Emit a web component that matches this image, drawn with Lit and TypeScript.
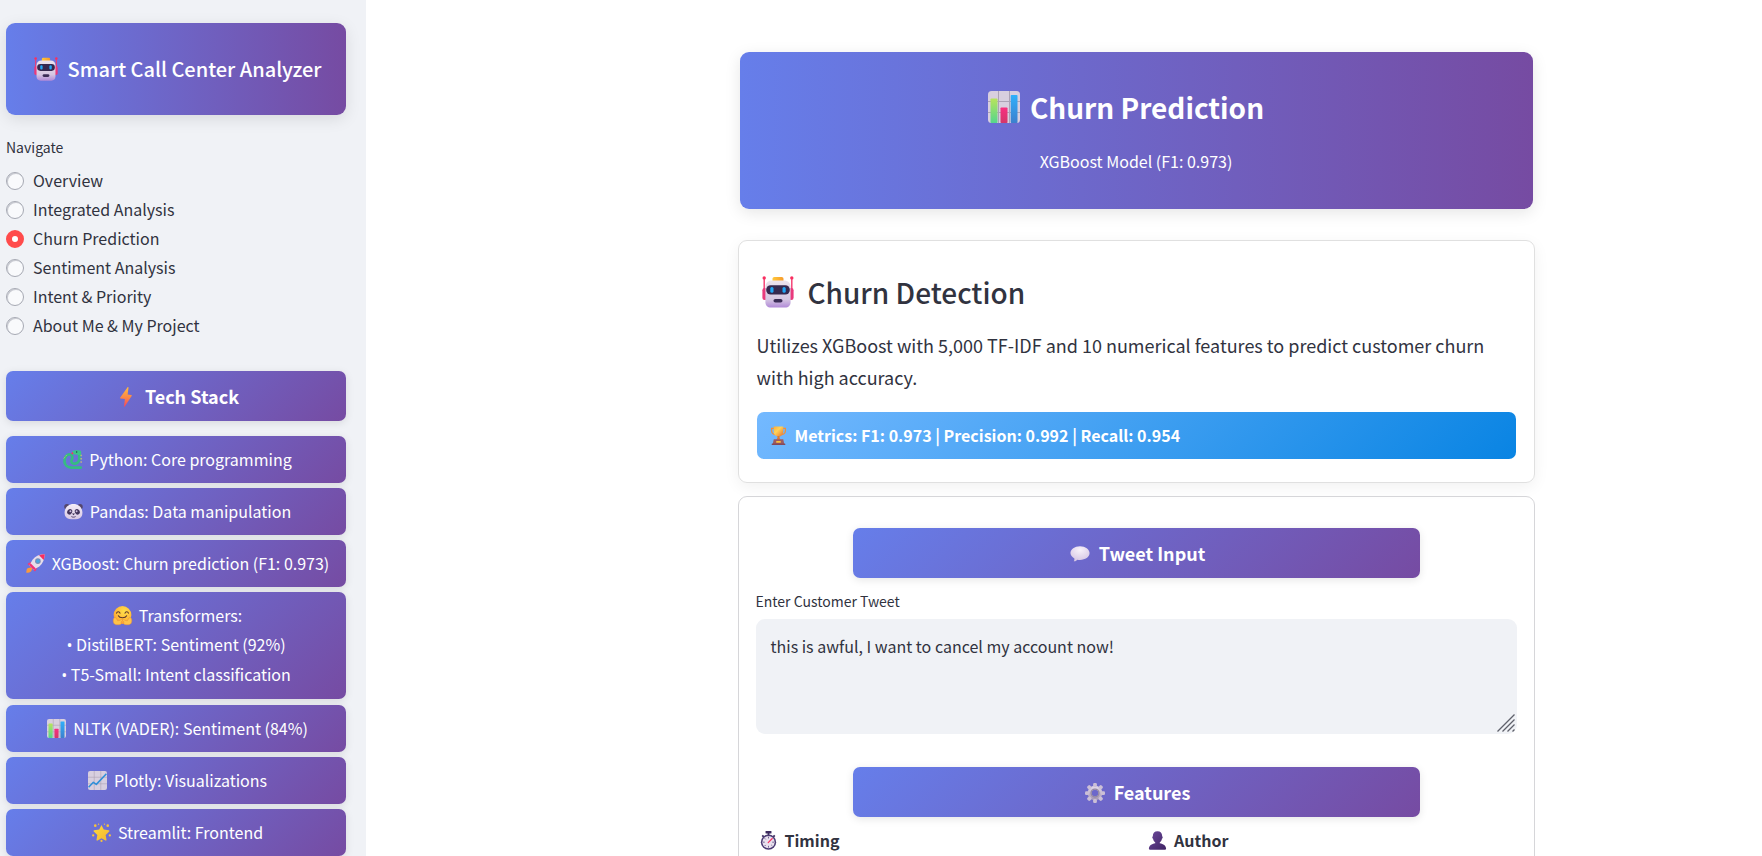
import { LitElement, html, css, svg, type TemplateResult } from "lit";
import { customElement, property, state } from "lit/decorators.js";

/* Artwork for every emoji, drawn on a 32 x 32 grid. */
const art: Record<string, TemplateResult> = {
  robot: svg`
    <defs>
      <linearGradient id="face" x1="0" y1="0" x2="0" y2="1"><stop offset="0" stop-color="#ece4ee"/><stop offset=".7" stop-color="#d5c6e2"/><stop offset="1" stop-color="#b18ad8"/></linearGradient>
      <linearGradient id="hat" x1="0" y1="0" x2="1" y2="0"><stop offset="0" stop-color="#ffc83a"/><stop offset="1" stop-color="#f79b2c"/></linearGradient>
    </defs>
    <path d="M2.2 2v14M29.8 2v14" stroke="#f4386e" stroke-width="1.4"/>
    <circle cx="2.2" cy="1.9" r="1.7" fill="#f92f60"/><circle cx="29.8" cy="1.9" r="1.7" fill="#f92f60"/>
    <rect x=".4" y="12" width="5" height="12" rx="2.2" fill="#e93a7c"/><rect x="26.6" y="12" width="5" height="12" rx="2.2" fill="#e93a7c"/>
    <rect x="10.5" y="1" width="11" height="6" rx="1.8" fill="url(#hat)"/>
    <path d="M10 4.5h12c4 0 6.600 2.500 6.600 6.500v15c0 3.500-2 5.500-5.500 5.500H8.900c-3.500 0-5.500-2-5.500-5.500V11c0-4 2.600-6.500 6.600-6.500z" fill="url(#face)"/>
    <rect x="4.200" y="9.200" width="23.600" height="9.300" rx="4.400" fill="#35284f"/>
    <rect x="8.300" y="11" width="3.200" height="5.800" rx="1.500" fill="#21a6f5"/><rect x="20.500" y="11" width="3.200" height="5.800" rx="1.500" fill="#21a6f5"/>
    <rect x="11.500" y="23" width="9" height="3.600" rx="1.800" fill="#3b2d57"/>`,
  chart: svg`
    <defs>
      <linearGradient id="cg" x1="0" y1="0" x2="0" y2="1"><stop offset="0" stop-color="#b8e45c"/><stop offset="1" stop-color="#54d68c"/></linearGradient>
      <linearGradient id="cb" x1="0" y1="0" x2="0" y2="1"><stop offset="0" stop-color="#2fb0fb"/><stop offset="1" stop-color="#3d7fcd"/></linearGradient>
      <linearGradient id="cr" x1="0" y1="0" x2="0" y2="1"><stop offset="0" stop-color="#f92f80"/><stop offset="1" stop-color="#d2376a"/></linearGradient>
    </defs>
    <rect width="32" height="32" rx="3.500" fill="#d8cfdf"/>
    <path d="M10.500 0v32M21.500 0v32M0 10.500h32M0 21.500h32" stroke="#aca2b5" stroke-width="1"/>
    <rect x="2.500" y="7.500" width="7" height="24.500" rx=".8" fill="url(#cg)"/>
    <rect x="12.500" y="16.500" width="7" height="15.500" rx=".8" fill="url(#cr)"/>
    <rect x="22.700" y="4" width="6.800" height="28" rx=".8" fill="url(#cb)"/>`,
  bolt: svg`
    <defs><linearGradient id="bl" x1="0" y1="0" x2="0" y2="1"><stop offset="0" stop-color="#ffbd3e"/><stop offset=".5" stop-color="#fc8a45"/><stop offset="1" stop-color="#f4475f"/></linearGradient></defs>
    <path d="M18.500.5 6.800 16.600c-.5.8-.2 1.500.7 1.700l6.800 1-1.500 11.500c-.1 1 .6 1.100 1.200.3L25 14.500c.5-.8.2-1.500-.7-1.600l-5.700-.8L20 1.200c.1-1-.8-1.500-1.500-.7z" fill="url(#bl)"/>`,
  snake: svg`
    <path d="M30 29.500H14C7.500 29.500 2.500 25.500 2.500 19S6 7.500 10.500 7.500c5 0 6.500 4 4.300 8.500-2 4 .2 7 4.200 7 5 0 8.500-3.500 8.500-9V4" fill="none" stroke="#36bb83" stroke-width="4.600" stroke-linecap="round" stroke-linejoin="round"/>
    <path d="M16 2C19 .2 28 0 30.500 2v6c-3 1-6 .5-8-.5-3 .3-5.500-.2-6.800-1.500-1-1.500-.8-3 .3-4z" fill="#3ac48a"/>
    <path d="M30.500 8v14" stroke="#f7e04a" stroke-width="1.600" stroke-dasharray="2.500 3"/>
    <path d="M1.500 14l6-7" stroke="#f7d64a" stroke-width="1.500" stroke-dasharray="2 2.500"/>
    <path d="M17 4.500l-2.500 2" stroke="#f92f60" stroke-width="2.600"/><circle cx="23" cy="3.500" r="1.200" fill="#2b3a4d"/>`,
  panda: svg`
    <defs><linearGradient id="pd" x1="0" y1="0" x2="0" y2="1"><stop offset="0" stop-color="#f5eef7"/><stop offset="1" stop-color="#d8c8e4"/></linearGradient></defs>
    <circle cx="5" cy="8" r="4.600" fill="#54466c"/><circle cx="27" cy="8" r="4.600" fill="#54466c"/>
    <path d="M16 3.500c9 0 15 6.500 15 14.500 0 7.500-4 11-15 11S1 25.500 1 18C1 10 7 3.500 16 3.500z" fill="url(#pd)"/>
    <ellipse cx="9.600" cy="16.500" rx="4" ry="4.800" transform="rotate(30 9.600 16.500)" fill="#43345c"/><ellipse cx="22.400" cy="16.500" rx="4" ry="4.800" transform="rotate(-30 22.400 16.500)" fill="#43345c"/>
    <circle cx="10.800" cy="15.500" r="1.600" fill="#cdbcdc"/><circle cx="21.200" cy="15.500" r="1.600" fill="#cdbcdc"/>
    <path d="M13.500 19.500h5L16 22.500z" fill="#33264a"/><path d="M12.500 24.500c1.500 1.300 5.500 1.300 7 0" stroke="#43345c" stroke-width="1.500" fill="none"/>`,
  rocket: svg`
    <path d="M9 22.500 2.500 23.800C1 26 .3 29 .5 31.500c3 .2 6-.6 8-2.200L10.500 25z" fill="#fb9a3b"/>
    <path d="M11.500 12.500 4.500 15c-1.500 1-2 2.500-1 3.300L9 20.500zM19.500 20.500l-2.500 7c-1 1.500-2.500 2-3.300 1L11.500 23z" fill="#f0387b"/>
    <path d="M31.500.5C23 .5 16 3.500 11 9.500L6.300 18c-.5 1-.3 2 .5 2.800l4.400 4.400c.8.800 1.800 1 2.800.5l8.500-4.700C28.500 16 31.500 9 31.500.5z" fill="#e6ddea"/>
    <path d="M6.300 18c-.5 1-.3 2 .5 2.800l4.400 4.400c.8.800 1.800 1 2.800.5l2.600-1.400-8.900-8.900z" fill="#ee3478"/>
    <path d="M31.500.5c-3.500 0-6.800.6-9.500 1.700l7.800 7.800c1.100-2.700 1.700-6 1.700-9.500z" fill="#f92f60"/>
    <circle cx="20" cy="12" r="4.700" fill="#7d8bb4"/><circle cx="20" cy="12" r="3" fill="#4ba5e0"/>`,
  hug: svg`
    <defs><radialGradient id="hg" cx=".6" cy=".3" r=".8"><stop offset="0" stop-color="#ffe04a"/><stop offset=".65" stop-color="#ffb637"/><stop offset="1" stop-color="#f28a35"/></radialGradient></defs>
    <circle cx="16" cy="15.200" r="15" fill="url(#hg)"/>
    <path d="M6 12c.8-3.200 5-3.200 5.800 0M20.200 12c.8-3.200 5-3.200 5.800 0" stroke="#5b352e" stroke-width="1.800" fill="none" stroke-linecap="round"/>
    <path d="M9 16.500c2 4.500 12 4.500 14 0" stroke="#5b352e" stroke-width="1.800" fill="none" stroke-linecap="round"/>
    <path d="M1 21c-1.500 4-.5 10.500 5 10.500h4c4 0 5-2.500 3.500-4.500l3-3.500c-1-2-3-1-4.500.5l-4 1-3-5c-1.500-1-3 0-4 1zM31 21c1.500 4 .5 10.500-5 10.500h-4c-4 0-5-2.500-3.500-4.500l-3-3.500c1-2 3-1 4.500.5l4 1 3-5c1.500-1 3 0 4 1z" fill="#ffc348" stroke="#e9923c" stroke-width=".9"/>`,
  trend: svg`
    <rect width="32" height="32" rx="3.500" fill="#d8cfdf"/>
    <path d="M10.500 0v32M21.500 0v32M0 10.500h32M0 21.500h32" stroke="#aca2b5" stroke-width="1"/>
    <path d="M1 27.500 9 19l5 3.500L31 4.500" fill="none" stroke="#2f8fd9" stroke-width="2.600" stroke-linejoin="round"/>`,
  star: svg`
    <defs><linearGradient id="st" x1="0" y1="0" x2="1" y2="1"><stop offset="0" stop-color="#ffd93b"/><stop offset="1" stop-color="#f3b52f"/></linearGradient></defs>
    <path d="M16 3.500l3.800 7.400 8.400 1.200c1.300.2 1.600 1.300.8 2.200l-6 5.900 1.400 8c.2 1.200-.8 1.900-1.800 1.300L16 25.800l-6.600 3.700c-1 .6-2-.1-1.800-1.300l1.400-8-6-5.900c-.8-.9-.5-2 .8-2.200l8.400-1.200z" fill="url(#st)"/>
    <g fill="#f8c33a"><circle cx="5.500" cy="4.500" r="2.200"/><circle cx="26.500" cy="4.500" r="2.200"/><circle cx="2" cy="21" r="1.900"/><circle cx="30" cy="21" r="1.900"/><circle cx="16" cy="30.200" r="1.800"/><circle cx="11" cy="2" r="1.100"/><circle cx="21" cy="2" r="1.100"/></g>`,
  trophy: svg`
    <defs><linearGradient id="tr" x1="0" y1="0" x2="1" y2="1"><stop offset="0" stop-color="#fdb03a"/><stop offset=".4" stop-color="#ffd257"/><stop offset="1" stop-color="#e8702f"/></linearGradient></defs>
    <path d="M8.500 4H4.300v4c0 3.500 2 5.500 5.500 6.500M23.500 4h4.200v4c0 3.500-2 5.500-5.500 6.500" fill="none" stroke="#f0913b" stroke-width="2"/>
    <path d="M8 1h16v8.500c0 4.500-3 8-8 8s-8-3.500-8-8z" fill="url(#tr)"/>
    <path d="M14.200 17h3.600v3l2 3h-7.600l2-3z" fill="#e0762f"/>
    <path d="M8 22.500h16l2 9.500H6z" fill="#9c5b62"/><rect x="4.500" y="29.500" width="23" height="2.500" rx="1" fill="#84495a"/><rect x="12" y="25.300" width="8" height="3" rx=".8" fill="#fbc13d"/>`,
  speech: svg`
    <defs><radialGradient id="sp" cx=".5" cy=".25" r=".8"><stop offset="0" stop-color="#f8f2fa"/><stop offset="1" stop-color="#d3c3e2"/></radialGradient></defs>
    <path d="M16 3.500c8.500 0 15.300 4.700 15.300 11s-6.800 11-15.300 11c-1.500 0-3-.2-4.200-.5C10.500 26.500 8.500 28 6 27.500c1-1.500 1.300-3 1-4.500C3.300 21 .7 18 .7 14.500.7 8.200 7.500 3.500 16 3.500z" fill="url(#sp)"/>`,
  gear: svg`
    <defs><linearGradient id="ge" x1="0" y1="0" x2="0" y2="1"><stop offset="0" stop-color="#ded4e6"/><stop offset="1" stop-color="#a99cb8"/></linearGradient></defs>
    <g fill="none" stroke="url(#ge)"><circle cx="16" cy="16" r="8.500" stroke-width="6.500"/></g>
    <g fill="#cbbfd6">${[0, 45, 90, 135, 180, 225, 270, 315].map((a) => svg`<rect x="13" y="0" width="6" height="6.500" rx="2" transform="rotate(${a} 16 16)"/>`)}</g>
    <circle cx="16" cy="16" r="6.300" fill="none" stroke="#9488a4" stroke-width="2.200"/>`,
  watch: svg`
    <rect x="11" y="0" width="10" height="4.200" rx="1" fill="#3c2b5e"/><path d="M16 3v4M5.500 7.500l2.500 2.500M26.500 7.500 24 10" stroke="#3c2b5e" stroke-width="3"/>
    <circle cx="16" cy="18.800" r="12.900" fill="#4b3b73"/><circle cx="16" cy="18.800" r="10.300" fill="#e9e1ee"/>
    <g stroke="#5b4a80" stroke-width="1.400"><path d="M16 9.500v3M16 25v3M6.700 18.800h3M22.300 18.800h3M9.500 12.300l1.800 1.800M9.500 25.300l1.800-1.800M22.500 25.300l-1.800-1.800"/></g>
    <path d="M15.500 19.500 22.300 12.700" stroke="#f92f60" stroke-width="2" stroke-linecap="round"/>`,
  person: svg`
    <defs><linearGradient id="pe" x1="0" y1="0" x2="1" y2="1"><stop offset="0" stop-color="#6d4a9c"/><stop offset="1" stop-color="#3f2363"/></linearGradient></defs>
    <path d="M16 .5c5 0 7.800 3 7.800 7.500v1c1.400.2 1.400 3.800-.3 4-.5 3-2 5-3.700 6.200v1.300c6 1.200 10.700 4 10.700 9.500 0 .8-.5 1.500-1.500 1.500H3c-1 0-1.500-.7-1.500-1.500 0-5.500 4.700-8.300 10.700-9.500v-1.300C10.500 18 9 16 8.500 13c-1.700-.2-1.700-3.800-.3-4V8C8.200 3.500 11 .5 16 .5z" fill="url(#pe)"/>`,
};

@customElement("emoji-icon")
export class EmojiIcon extends LitElement {
  @property() name = "robot";

  static styles = css`
    :host { display: inline-flex; flex: none; align-items: center; justify-content: center; width: 25px; height: 19px; margin-right: 4px; vertical-align: -3px; }
    :host([size="md"]) { width: 27px; height: 20px; margin-right: 5px; }
    :host([size="lg"]) { width: 32px; height: 24px; margin-right: 5px; vertical-align: -4px; }
    :host([size="xl"]) { width: 43px; height: 32px; margin-right: 8px; vertical-align: -4px; }
    svg { height: 100%; aspect-ratio: 1; overflow: visible; }
  `;

  render() {
    return html`<svg viewBox="0 0 32 32" aria-hidden="true">${art[this.name]}</svg>`;
  }
}

const PAGES = ["Overview", "Integrated Analysis", "Churn Prediction", "Sentiment Analysis", "Intent & Priority", "About Me & My Project"];

const STACK: { icon: string; text: string; points?: string[] }[] = [
  { icon: "snake", text: "Python: Core programming" },
  { icon: "panda", text: "Pandas: Data manipulation" },
  { icon: "rocket", text: "XGBoost: Churn prediction (F1: 0.973)" },
  { icon: "hug", text: "Transformers:", points: ["DistilBERT: Sentiment (92%)", "T5-Small: Intent classification"] },
  { icon: "chart", text: "NLTK (VADER): Sentiment (84%)" },
  { icon: "trend", text: "Plotly: Visualizations" },
  { icon: "star", text: "Streamlit: Frontend" },
];

@customElement("app-root")
export class AppRoot extends LitElement {
  @state() private page = "Churn Prediction";

  static styles = css`
    :host {
      display: grid;
      grid-template-columns: 366px minmax(0, 1fr);
      height: 100vh;
      overflow: hidden;
      background: #fff;
      color: #31333f;
      font: 400 16px/29px "Noto Sans CJK SC", "Source Sans Pro", sans-serif;
    }
    * { box-sizing: border-box; }
    h1, h2, h3, h4, p, ul, fieldset { margin: 0; padding: 0; border: 0; }

    aside { display: flex; flex-direction: column; min-height: 0; padding: 23px 20px 0 6px; background: #f0f2f6; }
    .brand { padding: 30px 0; border-radius: 9px; background: linear-gradient(90deg, #667eea, #764ba2); box-shadow: 0 4px 16px rgba(0, 0, 0, 0.1); color: #fff; font-size: 20px; font-weight: 500; line-height: 32px; text-align: center; white-space: nowrap; }
    .nav { margin-top: 21px; }
    legend, .label { display: block; padding: 0; font-size: 14px; line-height: 22px; }
    legend { margin-bottom: 8px; }
    .option { display: flex; align-items: center; gap: 9px; cursor: pointer; }
    .option input { appearance: none; width: 18px; height: 18px; margin: 0; border: 1px solid #a6a9b3; border-radius: 50%; background: #f9fafc; box-shadow: inset 1px 1px 0 #c9cbd2; }
    .option input:checked { border: 6px solid #ff4b4b; background: #fff; box-shadow: none; }

    .band { border-radius: 7px; background: linear-gradient(135deg, #667eea, #764ba2); box-shadow: 0 2px 9px rgba(0, 0, 0, 0.1); color: #fff; text-align: center; }
    h3.band { padding: 10px 0; font-size: 18px; font-weight: 700; line-height: 30px; }
    aside h3.band { margin-top: 31px; }
    .stack { display: flex; flex: 1; flex-direction: column; justify-content: space-between; gap: 5px; min-height: 0; margin-top: 15px; list-style: none; }
    .stack li { padding: 9px 0; white-space: nowrap; }
    .line { display: block; }
    .bullet { font-family: "Open Sans", sans-serif; }

    main { min-width: 0; min-height: 0; padding: 52px 0 0 144px; overflow: hidden; }
    .column { display: flex; flex-direction: column; max-width: 797px; margin: 0 auto; }
    .hero { margin: 0 2px 31px; padding: 31px 0 33px; border-radius: 9px; background: linear-gradient(90deg, #667eea, #764ba2); box-shadow: 0 4px 16px rgba(0, 0, 0, 0.1); color: #fff; text-align: center; }
    h1 { padding-right: 25px; font-size: 28px; font-weight: 700; line-height: 48px; }
    h1 emoji-icon { margin-right: 4px; }
    .hero p { margin-top: 16px; line-height: 29px; }
    .card { border: 1px solid #e0e0e0; border-radius: 9px; }
    .intro { margin-bottom: 13px; padding: 29px 18px 23px; box-shadow: 0 4px 16px rgba(0, 0, 0, 0.06); }
    h2 { font-size: 28px; font-weight: 500; line-height: 44px; }
    .intro p { margin: 15px 0 19px; font-size: 18px; line-height: 32px; }
    .metrics { padding: 9px; border-radius: 7px; background: linear-gradient(135deg, #74b9ff, #0984e3); color: #fff; font-weight: 700; }
    .form { padding: 31px 17px; border-color: #d6d6d9; }
    .form h3.band { margin: 0 97px; }
    .label { margin: 12px 0 7px; }
    .field { position: relative; margin-bottom: 33px; }
    textarea { display: block; width: 100%; height: 115px; padding: 13px 15px; border: 0; border-radius: 9px; outline: none; background: #f0f2f6; color: inherit; font: inherit; resize: vertical; }
    textarea::-webkit-resizer { display: none; }
    .grip { position: absolute; right: 2px; bottom: 2px; width: 18px; height: 18px; pointer-events: none; }
    .pair { display: grid; grid-template-columns: 1fr 1fr; gap: 18px; margin-top: 9px; }
    h4 { font-size: 16px; font-weight: 700; line-height: 28px; }
  `;

  render() {
    return html`
      <aside>
        <h3 class="brand"><emoji-icon size="lg" name="robot"></emoji-icon>Smart Call Center Analyzer</h3>
        <fieldset class="nav">
          <legend>Navigate</legend>
          ${PAGES.map(
            (name) => html`<label class="option">
              <input type="radio" name="page" .checked=${this.page === name} @change=${() => (this.page = name)} />${name}
            </label>`
          )}
        </fieldset>
        <h3 class="band"><emoji-icon size="md" name="bolt"></emoji-icon>Tech Stack</h3>
        <ul class="stack">
          ${STACK.map(
            ({ icon, text, points = [] }) => html`<li class="band">
              <span class="line"><emoji-icon name=${icon}></emoji-icon>${text}</span>
              ${points.map((point) => html`<span class="line"><span class="bullet">•</span> ${point}</span>`)}
            </li>`
          )}
        </ul>
      </aside>
      <main>
        <div class="column">
          <header class="hero">
            <h1><emoji-icon size="xl" name="chart"></emoji-icon>Churn Prediction</h1>
            <p>XGBoost Model (F1: 0.973)</p>
          </header>
          <section class="card intro">
            <h2><emoji-icon size="xl" name="robot"></emoji-icon>Churn Detection</h2>
            <p>Utilizes XGBoost with 5,000 TF-IDF and 10 numerical features to predict customer churn with high accuracy.</p>
            <div class="metrics"><emoji-icon name="trophy"></emoji-icon>Metrics: F1: 0.973 | Precision: 0.992 | Recall: 0.954</div>
          </section>
          <form class="card form">
            <h3 class="band"><emoji-icon size="md" name="speech"></emoji-icon>Tweet Input</h3>
            <label class="label" for="tweet">Enter Customer Tweet</label>
            <div class="field">
              <textarea id="tweet" .value=${"this is awful, I want to cancel my account now!"}></textarea>
              <svg class="grip" viewBox="0 0 18 18" aria-hidden="true"><path d="M.5 17.500 17.500.5M5.500 17.500l12-12M10.500 17.500l7-7M15.500 17.500l2-2" stroke="#5f616b" stroke-width="1.300" /></svg>
            </div>
            <h3 class="band"><emoji-icon size="md" name="gear"></emoji-icon>Features</h3>
            <div class="pair">
              <h4><emoji-icon name="watch"></emoji-icon>Timing</h4>
              <h4><emoji-icon name="person"></emoji-icon>Author</h4>
            </div>
          </form>
        </div>
      </main>
    `;
  }
}
